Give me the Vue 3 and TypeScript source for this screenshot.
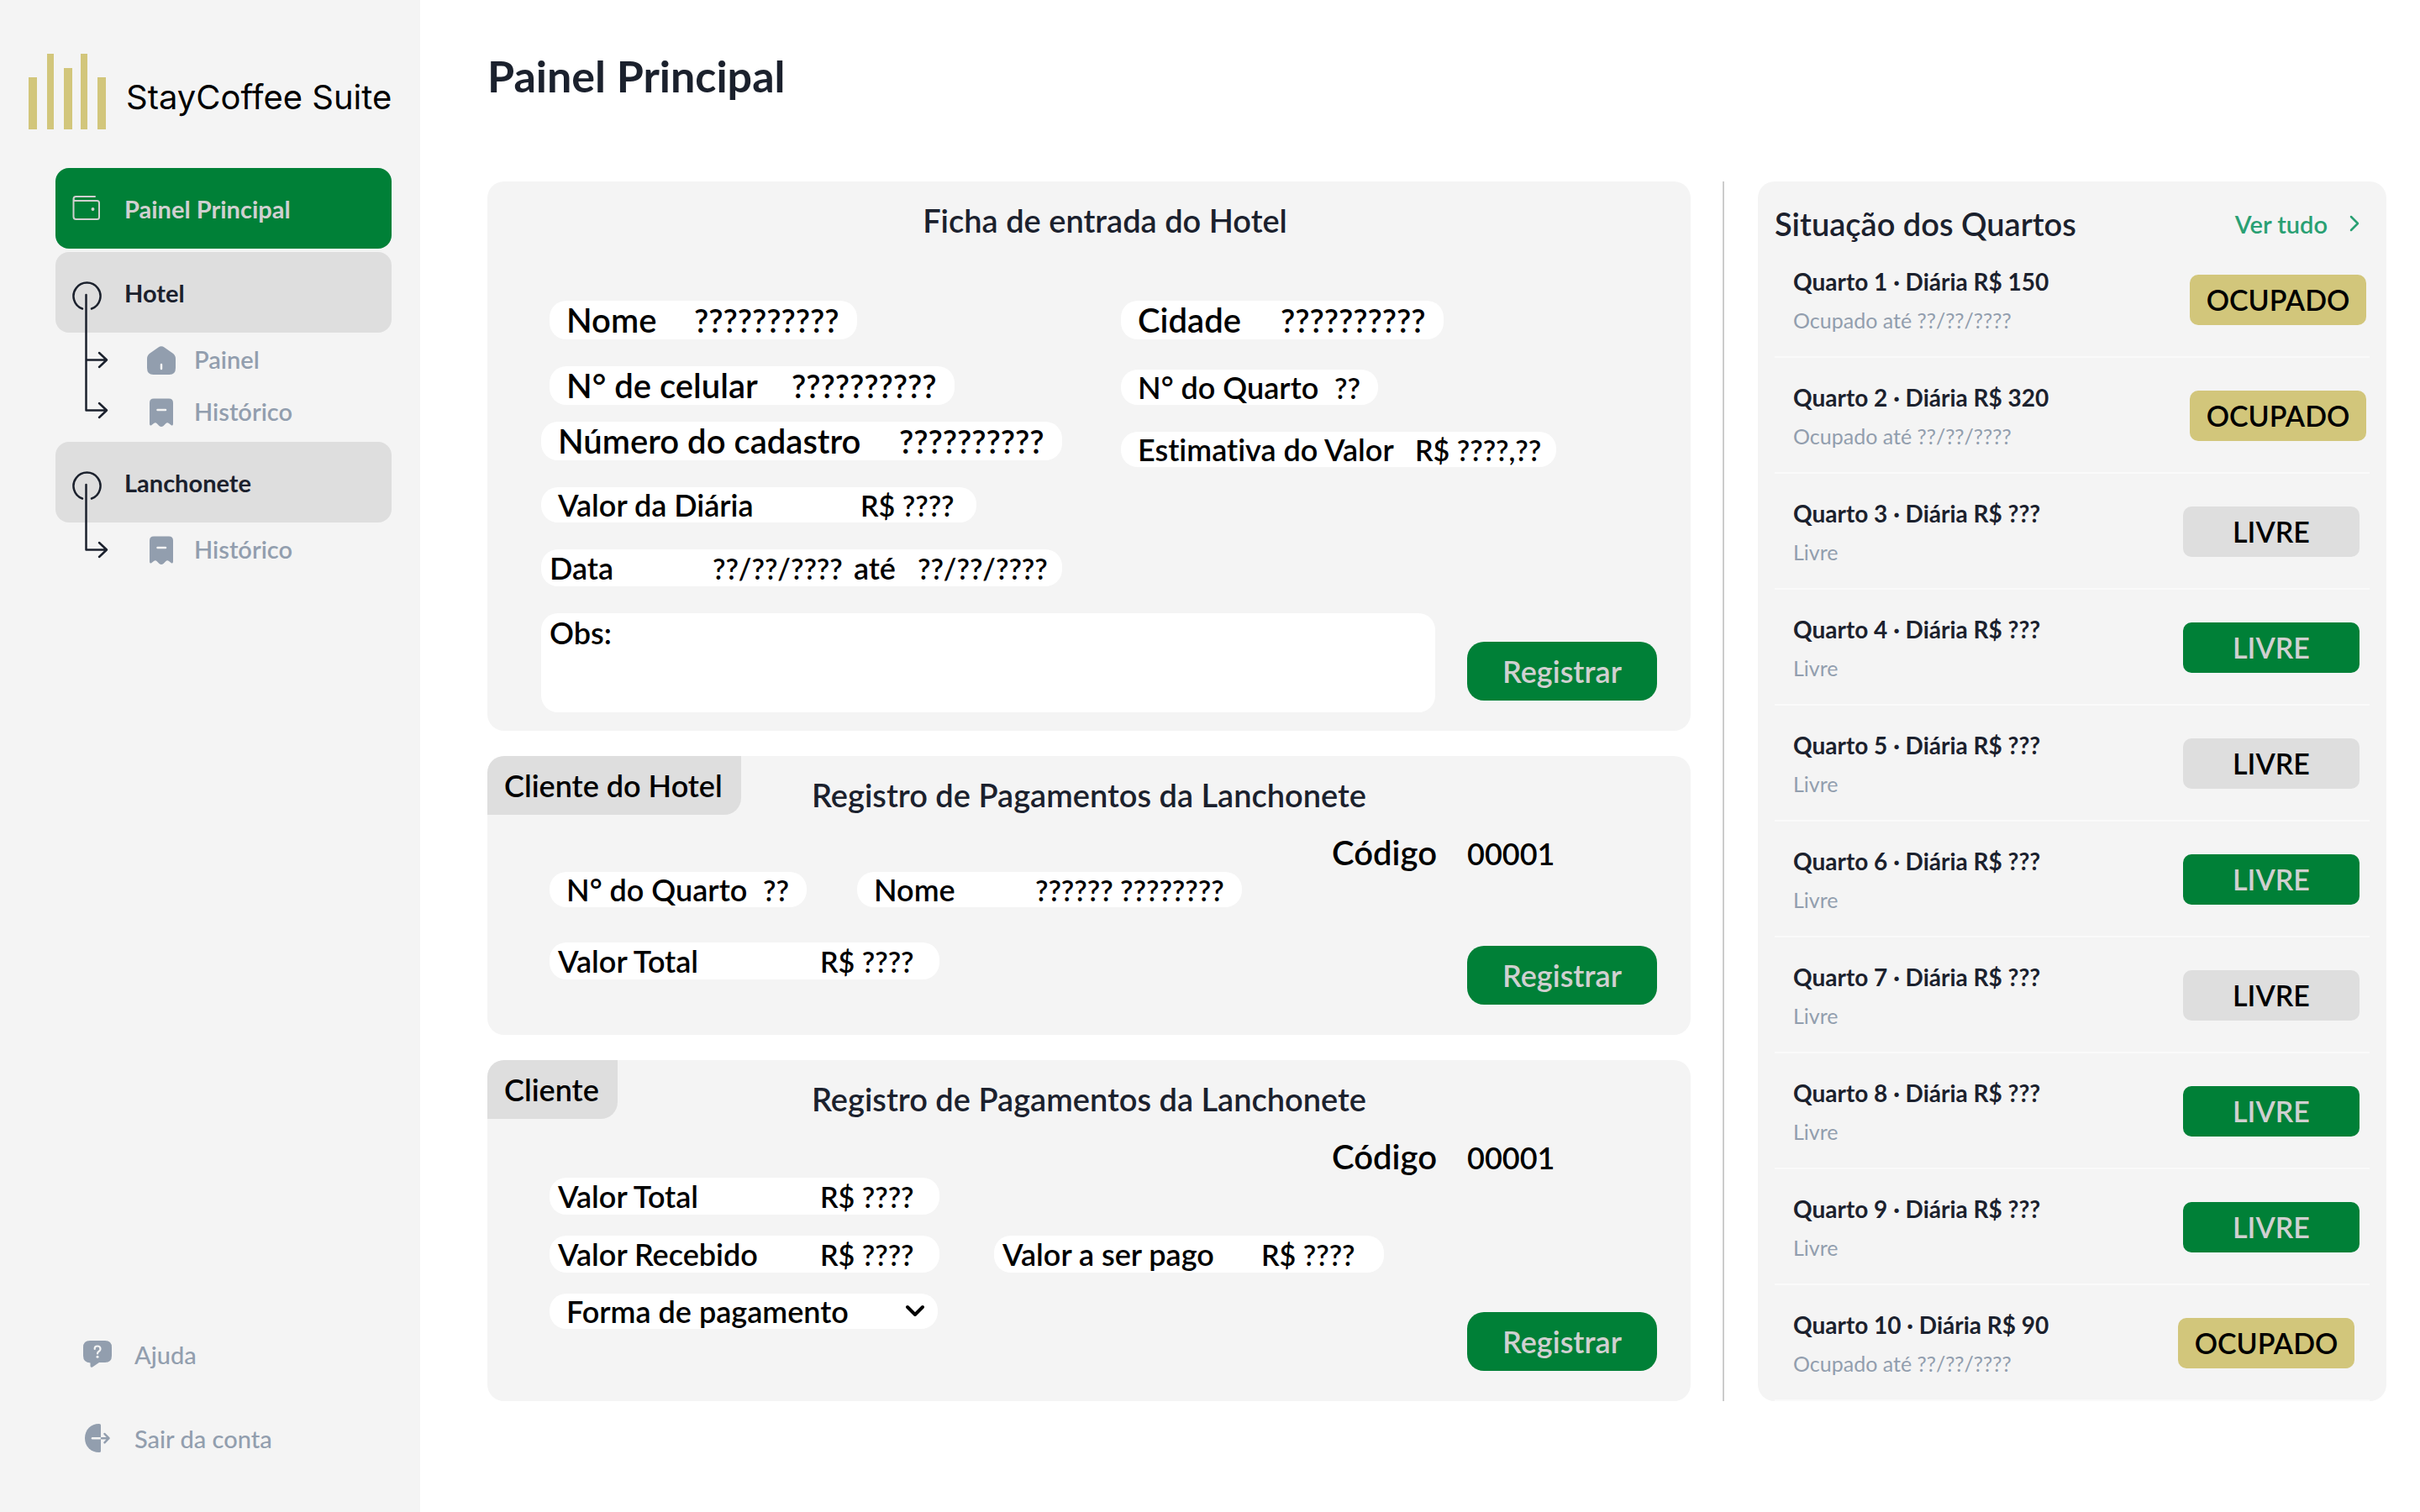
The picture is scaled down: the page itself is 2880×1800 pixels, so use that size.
<script setup lang="ts">
import { ref } from 'vue'

type Tone = 'taken' | 'idle' | 'free'
interface Room {
  id: number
  rate: string
  tone: Tone
  edge: 'near' | 'mid' | 'far'
}

const rooms: Room[] = [
  { id: 1, rate: '150', tone: 'taken', edge: 'near' },
  { id: 2, rate: '320', tone: 'taken', edge: 'near' },
  { id: 3, rate: '???', tone: 'idle', edge: 'mid' },
  { id: 4, rate: '???', tone: 'free', edge: 'mid' },
  { id: 5, rate: '???', tone: 'idle', edge: 'mid' },
  { id: 6, rate: '???', tone: 'free', edge: 'mid' },
  { id: 7, rate: '???', tone: 'idle', edge: 'mid' },
  { id: 8, rate: '???', tone: 'free', edge: 'mid' },
  { id: 9, rate: '???', tone: 'free', edge: 'mid' },
  { id: 10, rate: '90', tone: 'taken', edge: 'far' },
]

const guest = ref({
  name: '??????????',
  city: '??????????',
  phone: '??????????',
  record: '??????????',
  room: '??',
  estimate: 'R$ ????,??',
  rate: 'R$ ????',
  from: '??/??/????',
  to: '??/??/????',
  notes: '',
})
const hotelSale = ref({ room: '??', name: '?????? ????????', total: 'R$ ????' })
const counterSale = ref({ total: 'R$ ????', received: 'R$ ????', due: 'R$ ????', method: '' })
</script>

<template>
  <div class="app">
    <aside class="sidebar">
      <div class="brand">
        <svg class="brand-mark" viewBox="0 0 92 90" aria-hidden="true">
          <path d="M0 28h10v62H0zM22 0h8v90h-8zM42 17h10v73H42zM62 0h8v90h-8zM82 28h10v62H82z" fill="#d2c67b" />
        </svg>
        <span class="brand-name">StayCoffee Suite</span>
      </div>

      <nav class="nav">
        <a href="#" class="nav-item active">
          <svg class="nav-icon" viewBox="0 0 34 34" fill="none" stroke="currentColor" stroke-width="2" stroke-linecap="round" stroke-linejoin="round" aria-hidden="true">
            <path d="M27 3H4.500Q1.500 3 1.500 6V27Q1.500 30 4.500 30H29.500Q32 30 32 27.500V10.500Q32 8 29.500 8H4Q1.500 8 1.500 5.500" />
            <circle cx="24.500" cy="18" r="1.200" fill="currentColor" stroke-width="1.500" />
          </svg>
          Painel Principal
        </a>

        <div class="nav-group">
          <a href="#" class="nav-item">Hotel</a>
          <a href="#" class="nav-sub">
            <svg class="sub-icon" viewBox="0 0 34 40" aria-hidden="true">
              <path d="M13.500 6.600Q17 4 20.500 6.600L30.500 13.500Q34 16 34 20V31Q34 39 26.500 39H7.500Q0 39 0 31V20Q0 16 3.500 13.500Z" fill="currentColor" />
              <path d="M17 27v5" stroke="#f4f4f4" stroke-width="2.500" stroke-linecap="round" />
            </svg>
            Painel
          </a>
          <a href="#" class="nav-sub">
            <svg class="sub-icon" viewBox="0 0 34 40" aria-hidden="true">
              <path d="M8 5.500H26Q31 5.500 31 10.500V35.500Q31 38.500 28.500 37L26 35Q24 33.600 22.500 35L19.500 38Q17 40 14.500 38L11.500 35Q10 33.600 8 35L5.500 37Q3 38.500 3 35.500V10.500Q3 5.500 8 5.500Z" fill="currentColor" />
              <path d="M12.500 19h9.500" stroke="#f4f4f4" stroke-width="2.500" stroke-linecap="round" />
            </svg>
            Histórico
          </a>
          <svg class="tree" width="44" height="170" viewBox="0 0 44 170" fill="none" stroke="#1b212d" stroke-width="2.500" stroke-linecap="round" stroke-linejoin="round" aria-hidden="true">
            <path d="M13 33.500A16 16 0 1 1 24 33.500" />
            <path d="M17.500 17V154.500H42M17.500 94.500H42M33 86l9 8.500-9 8.500M33 146l9 8.500-9 8.500" />
          </svg>
        </div>

        <div class="nav-group second">
          <a href="#" class="nav-item">Lanchonete</a>
          <a href="#" class="nav-sub">
            <svg class="sub-icon" viewBox="0 0 34 40" aria-hidden="true">
              <path d="M8 5.500H26Q31 5.500 31 10.500V35.500Q31 38.500 28.500 37L26 35Q24 33.600 22.500 35L19.500 38Q17 40 14.500 38L11.500 35Q10 33.600 8 35L5.500 37Q3 38.500 3 35.500V10.500Q3 5.500 8 5.500Z" fill="currentColor" />
              <path d="M12.500 19h9.500" stroke="#f4f4f4" stroke-width="2.500" stroke-linecap="round" />
            </svg>
            Histórico
          </a>
          <svg class="tree" width="44" height="110" viewBox="0 0 44 110" fill="none" stroke="#1b212d" stroke-width="2.500" stroke-linecap="round" stroke-linejoin="round" aria-hidden="true">
            <path d="M13 33.500A16 16 0 1 1 24 33.500" />
            <path d="M17.500 17V94.500H42M33 86l9 8.500-9 8.500" />
          </svg>
        </div>
      </nav>

      <div class="side-foot">
        <a href="#" class="foot-link">
          <svg class="nav-icon" viewBox="0 0 34 34" aria-hidden="true">
            <path d="M8 1H26Q34 1 34 9V19Q34 27 26 27H19L11 32.500Q8.500 33.500 8.500 31V27.500Q0 27 0 19V9Q0 1 8 1Z" fill="currentColor" />
            <path d="M13.700 11Q13.500 7.500 17 7.500T20.500 11Q20.500 12.600 18.700 13.700T17 16.500" fill="none" stroke="#f4f4f4" stroke-width="2.200" stroke-linecap="round" />
            <circle cx="17" cy="20.300" r="1.500" fill="#f4f4f4" />
          </svg>
          Ajuda
        </a>
        <a href="#" class="foot-link">
          <svg class="nav-icon" viewBox="0 0 34 34" fill="none" stroke-linecap="round" stroke-linejoin="round" aria-hidden="true">
            <path d="M21 1.500Q21 0 19 0C9 0 2 7 2 17S9 34 19 34Q21 34 21 32.500Z" fill="currentColor" />
            <path d="M11 17.200H20" stroke="#f4f4f4" stroke-width="2.500" />
            <path d="M22 17.200H30.500M25.500 12l5 5.200-5 5.200" stroke="currentColor" stroke-width="2.500" />
          </svg>
          Sair da conta
        </a>
      </div>
    </aside>

    <main class="main">
      <h1>Painel Principal</h1>

      <div class="board">
        <div class="cards">
          <form class="card" @submit.prevent>
            <h2 class="wide-title">Ficha de entrada do Hotel</h2>
            <div class="entry">
              <div class="stack">
                <div class="stack inset">
                  <label class="field large person"><span>Nome</span><input v-model="guest.name" /></label>
                  <label class="field large phone"><span>N° de celular</span><input v-model="guest.phone" /></label>
                </div>
                <div class="stack">
                  <label class="field large record"><span>Número do cadastro</span><input v-model="guest.record" /></label>
                  <label class="field rate"><span>Valor da Diária</span><input v-model="guest.rate" /></label>
                  <div class="field tall dates">
                    <label for="from">Data</label><input id="from" v-model="guest.from" />
                    <label for="to">até</label><input id="to" v-model="guest.to" />
                  </div>
                </div>
              </div>
              <div class="stack">
                <label class="field large city"><span>Cidade</span><input v-model="guest.city" /></label>
                <label class="field room-no spaced"><span>N° do Quarto</span><input v-model="guest.room" /></label>
                <label class="field estimate"><span>Estimativa do Valor</span><input v-model="guest.estimate" /></label>
              </div>
            </div>
            <div class="notes-row">
              <div class="notes">
                <label for="notes">Obs:</label>
                <textarea id="notes" v-model="guest.notes"></textarea>
              </div>
              <button type="submit" class="register">Registrar</button>
            </div>
          </form>

          <form class="card" @submit.prevent>
            <span class="tab">Cliente do Hotel</span>
            <h2>Registro de Pagamentos da Lanchonete</h2>
            <p class="code"><span>Código</span><output>00001</output></p>
            <div class="sale">
              <div class="sale-fields hotel">
                <div class="line">
                  <label class="field room-no"><span>N° do Quarto</span><input v-model="hotelSale.room" /></label>
                  <label class="field client"><span>Nome</span><input v-model="hotelSale.name" /></label>
                </div>
                <label class="field tall amount"><span>Valor Total</span><input v-model="hotelSale.total" /></label>
              </div>
              <button type="submit" class="register">Registrar</button>
            </div>
          </form>

          <form class="card" @submit.prevent>
            <span class="tab">Cliente</span>
            <h2>Registro de Pagamentos da Lanchonete</h2>
            <p class="code"><span>Código</span><output>00001</output></p>
            <div class="sale">
              <div class="sale-fields counter">
                <label class="field tall amount"><span>Valor Total</span><input v-model="counterSale.total" /></label>
                <div class="line">
                  <label class="field tall amount"><span>Valor Recebido</span><input v-model="counterSale.received" /></label>
                  <label class="field tall due"><span>Valor a ser pago</span><input v-model="counterSale.due" /></label>
                </div>
                <div class="field method">
                  <select v-model="counterSale.method" aria-label="Forma de pagamento">
                    <option value="">Forma de pagamento</option>
                  </select>
                  <svg class="caret" width="24" height="18" viewBox="0 0 24 18" fill="none" stroke="#000" stroke-width="4" stroke-linecap="round" stroke-linejoin="round" aria-hidden="true">
                    <path d="M3 4l9 9 9-9" />
                  </svg>
                </div>
              </div>
              <button type="submit" class="register">Registrar</button>
            </div>
          </form>
        </div>

        <section class="rooms">
          <header class="rooms-head">
            <h2>Situação dos Quartos</h2>
            <a href="#" class="see-all">
              Ver tudo
              <svg width="12" height="20" viewBox="0 0 12 20" fill="none" stroke="currentColor" stroke-width="2.500" stroke-linecap="round" stroke-linejoin="round" aria-hidden="true">
                <path d="M2 2l8 8-8 8" />
              </svg>
            </a>
          </header>
          <ul>
            <li v-for="room in rooms" :key="room.id" :class="room.edge">
              <div>
                <h3>Quarto {{ room.id }} · Diária R$ {{ room.rate }}</h3>
                <p>{{ room.tone === 'taken' ? 'Ocupado até ??/??/????' : 'Livre' }}</p>
              </div>
              <span class="badge" :class="room.tone">{{ room.tone === 'taken' ? 'OCUPADO' : 'LIVRE' }}</span>
            </li>
          </ul>
        </section>
      </div>
    </main>
  </div>
</template>

<style>
body {
  margin: 0;
  background: #fff;
}
</style>

<style scoped>
* {
  box-sizing: border-box;
}
.app {
  display: flex;
  min-height: 100vh;
  font-family: Lato, 'Liberation Sans', sans-serif;
  font-weight: 600;
  font-variant-ligatures: none;
  color: #1b212d;
}
a {
  color: inherit;
  text-decoration: none;
}
h1,
h2,
h3,
p,
ul {
  margin: 0;
  padding: 0;
}

/* Sidebar */
.sidebar {
  flex: 0 0 500px;
  display: flex;
  flex-direction: column;
  padding: 64px 0 38px;
  background: #f4f4f4;
}
.brand {
  display: flex;
  align-items: flex-end;
  gap: 24px;
  padding-left: 34px;
}
.brand-mark {
  width: 92px;
  height: 90px;
}
.brand-name {
  padding-bottom: 14px;
  font: 400 40px/48px Inter, sans-serif;
  color: #000;
  white-space: nowrap;
}
.nav {
  margin: 46px 34px 0 66px;
}
.nav-item {
  display: flex;
  align-items: center;
  gap: 28px;
  height: 96px;
  padding-left: 82px;
  border-radius: 16px;
  background: #dedede;
  font-size: 29px;
  font-weight: 700;
}
.nav-item.active {
  padding-left: 20px;
  background: #008037;
  color: #d0d0d0;
}
.nav-icon {
  flex: none;
  width: 34px;
  height: 34px;
}
.nav-group {
  position: relative;
  margin-top: 4px;
}
.nav-group.second {
  margin-top: 6px;
}
.nav-sub {
  display: flex;
  align-items: center;
  gap: 22px;
  height: 62px;
  padding-left: 109px;
  font-size: 29px;
  color: #929eae;
}
.sub-icon {
  flex: none;
  width: 34px;
  height: 40px;
}
.tree {
  position: absolute;
  left: 19px;
  top: 34px;
}
.side-foot {
  margin-top: auto;
  padding-left: 99px;
}
.foot-link {
  display: flex;
  align-items: center;
  gap: 27px;
  height: 100px;
  font-size: 29px;
  font-weight: 500;
  color: #929eae;
}

/* Main area */
.main {
  flex: 1;
  min-width: 0;
  padding: 58px 40px 0 80px;
}
h1 {
  font-size: 52px;
  line-height: 64px;
}
.board {
  display: flex;
  margin-top: 94px;
}
.cards {
  flex: 1;
  min-width: 0;
  display: flex;
  flex-direction: column;
  gap: 30px;
}
.card {
  position: relative;
  padding-top: 22px;
  border-radius: 20px;
  background: #f4f4f4;
  overflow: hidden;
}
h2 {
  font-size: 38px;
  font-weight: 600;
  line-height: 48px;
  text-align: center;
}
.wide-title {
  padding-left: 38px;
}
.tab {
  position: absolute;
  left: 0;
  top: 0;
  padding: 0 22px 0 20px;
  border-bottom-right-radius: 20px;
  background: #dedede;
  color: #000;
  font-size: 36px;
  line-height: 70px;
}
.entry {
  display: grid;
  grid-template-columns: 690px 1fr;
  margin-top: 72px;
  padding-left: 64px;
}
.stack {
  display: flex;
  flex-direction: column;
  gap: 32px;
}
.entry > .stack:first-child {
  gap: 20px;
}
.inset {
  padding-left: 10px;
}

/* Pill fields */
.field {
  display: flex;
  align-items: baseline;
  height: 42px;
  padding-left: 20px;
  border-radius: 20px;
  background: #fff;
  color: #000;
  font-size: 36px;
  line-height: 42px;
  white-space: nowrap;
}
.field.tall {
  height: 44px;
  padding-left: 10px;
  line-height: 44px;
}
.field.large {
  height: 46px;
  font-size: 40px;
  line-height: 44px;
}
.field > span,
.field > label {
  flex: none;
}
.field input {
  flex: 1;
  min-width: 0;
  height: 42px;
  padding: 0;
  border: 0;
  outline: 0;
  background: none;
  color: inherit;
  font: inherit;
  font-size: 34px;
  line-height: 42px;
}
.field.large input {
  height: 46px;
  font-size: 38px;
  line-height: 46px;
}
.person { width: 366px; }
.person > span { width: 152px; }
.phone { width: 482px; }
.phone > span { width: 268px; }
.record { width: 620px; }
.record > span { width: 406px; }
.rate { width: 518px; }
.rate > span { width: 360px; }
.city { width: 384px; }
.city > span { width: 170px; }
.room-no { width: 306px; }
.room-no > span { width: 234px; }
.spaced { margin-top: 4px; }
.estimate { width: 518px; }
.estimate > span { width: 330px; }
.client { width: 458px; }
.client > span { width: 192px; }
.amount { width: 464px; }
.amount > span { width: 312px; }
.due { width: 464px; }
.due > span { width: 308px; }
.dates { width: 620px; }
.dates > label:first-child { width: 194px; }
.dates > label:nth-of-type(2) { width: 76px; }
.dates input:first-of-type { flex: 0 0 168px; }

.notes-row {
  display: flex;
  align-items: flex-end;
  gap: 38px;
  margin-top: 32px;
  padding: 0 40px 22px 64px;
}
.notes {
  flex: 1;
  display: flex;
  height: 118px;
  padding: 0 20px 0 10px;
  border-radius: 20px;
  background: #fff;
  color: #000;
  font-size: 36px;
  line-height: 46px;
}
.notes textarea {
  flex: 1;
  padding: 0 0 0 12px;
  border: 0;
  outline: 0;
  background: none;
  resize: none;
  font: inherit;
}
.register {
  flex: none;
  width: 226px;
  height: 70px;
  padding: 0;
  border: 0;
  border-radius: 20px;
  background: #008037;
  color: #d0d0d0;
  font: inherit;
  font-size: 36px;
}
.notes-row .register {
  margin-bottom: 14px;
}
.code {
  display: flex;
  justify-content: flex-end;
  align-items: baseline;
  gap: 36px;
  height: 46px;
  margin-top: 22px;
  padding-right: 40px;
  color: #000;
  font-size: 40px;
  line-height: 46px;
}
.code output {
  width: 226px;
  font-size: 36px;
}
.sale {
  display: flex;
  align-items: flex-end;
  padding: 0 40px 36px 74px;
}
.sale-fields {
  flex: 1;
  display: flex;
  flex-direction: column;
}
.hotel {
  gap: 42px;
  padding-bottom: 30px;
}
.hotel .line {
  display: flex;
  gap: 60px;
}
.counter {
  gap: 25px;
  padding: 2px 0 50px;
}
.counter .line {
  display: flex;
  gap: 65px;
}
.method {
  position: relative;
  width: 462px;
}
.method select {
  flex: 1;
  height: 42px;
  padding: 0;
  border: 0;
  outline: 0;
  appearance: none;
  background: none;
  color: inherit;
  font: inherit;
}
.caret {
  position: absolute;
  right: 15px;
  top: 12px;
}

/* Rooms */
.rooms {
  flex: 0 0 790px;
  margin-left: 38px;
  border-left: 2px solid #ccc;
  padding-left: 40px;
}
.rooms-head {
  display: flex;
  align-items: center;
  justify-content: space-between;
  height: 72px;
  padding: 28px 32px 0 20px;
  border-radius: 20px 20px 0 0;
  background: #f4f4f4;
}
.see-all {
  display: flex;
  align-items: center;
  gap: 26px;
  color: #29a073;
  font-size: 29px;
}
.rooms ul {
  list-style: none;
  padding: 0 20px;
  border-radius: 0 0 20px 20px;
  background: #f4f4f4;
}
.rooms li {
  display: flex;
  justify-content: space-between;
  align-items: flex-start;
  height: 138px;
  padding: 30px 12px 0 22px;
  border-bottom: 2px solid #fafafa;
}
.rooms li.near {
  padding-right: 4px;
}
.rooms li.far {
  padding-right: 18px;
}
h3 {
  font-size: 28px;
  font-weight: 700;
  line-height: 34px;
}
.rooms li p {
  margin-top: 14px;
  color: #929eae;
  font-size: 25px;
  font-weight: 400;
  line-height: 30px;
}
.badge {
  width: 210px;
  margin-top: 9px;
  border-radius: 10px;
  font-size: 34px;
  line-height: 60px;
  text-align: center;
  color: #000;
}
.taken {
  background: #d2c67b;
}
.idle {
  background: #dedede;
}
.free {
  background: #008037;
  color: #d0d0d0;
}
</style>
